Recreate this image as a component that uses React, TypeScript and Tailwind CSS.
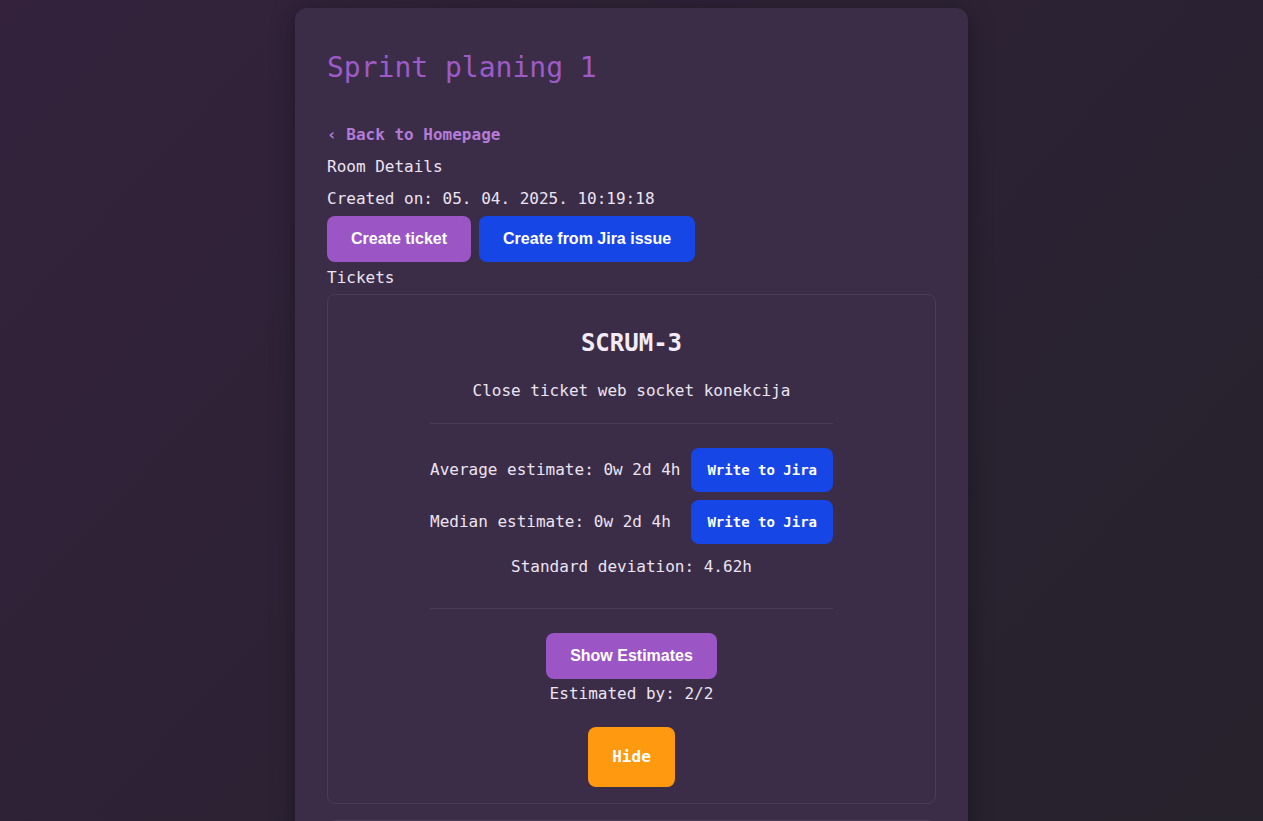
import React from 'react';

const mono = "font-['DejaVu_Sans_Mono','Liberation_Mono',monospace]";
const sans = "font-['Liberation_Sans',Arial,sans-serif]";

function EstimateRow({ label, value }: { label: string; value: string }) {
  return (
    <div className="flex items-center justify-between">
      <span>
        {label}: {value}
      </span>
      <button className="rounded-lg bg-[#1746e6] px-4 py-[12px] text-[14px] leading-5 font-bold text-white">
        Write to Jira
      </button>
    </div>
  );
}

function TicketCard() {
  return (
    <div className="rounded-lg border border-[#4b3d5a] bg-[#3b2d48] px-6 pt-8 pb-4">
      <h3 className="text-center text-[24px] leading-8 font-bold text-[#f3ecf7]">SCRUM-3</h3>
      <p className="mt-5 text-center">Close ticket web socket konekcija</p>
      <div className="mx-auto w-[403px]">
        <div className="mt-5 h-px bg-[#4b3d5a]" />
        <div className="mt-6 flex flex-col gap-2">
          <EstimateRow label="Average estimate" value="0w 2d 4h" />
          <EstimateRow label="Median estimate" value="0w 2d 4h" />
        </div>
        <p className="mt-[11px] text-center">Standard deviation: 4.62h</p>
        <div className="mt-[29px] h-px bg-[#4b3d5a]" />
      </div>
      <div className="mt-6 flex flex-col items-center">
        <button
          className={`${sans} rounded-lg bg-[#9b55c5] px-6 py-[11px] text-base leading-6 font-bold text-white`}
        >
          Show Estimates
        </button>
        <p className="mt-[3px]">Estimated by: 2/2</p>
        <button className="mt-[21px] rounded-lg bg-[#ff990f] px-6 py-[18px] text-base leading-6 font-bold text-white">
          Hide
        </button>
      </div>
    </div>
  );
}

export default function App() {
  return (
    <div
      className={`${mono} min-h-screen bg-gradient-to-br from-[#34223c] via-[#2a2232] to-[#242227] text-[#ede4f2]`}
    >
      <div className="mx-auto w-[673px] pt-2">
        <div className="rounded-xl bg-[#3b2d48] px-8 pt-[39px] pb-8 shadow-[0_4px_24px_rgba(0,0,0,0.35)]">
          <h1 className="text-[28px] leading-[42px] text-[#9d5bc8]">Sprint planing 1</h1>

          <a href="#" className="mt-[34px] block font-bold text-[#b57bd8]">
            ‹ Back to Homepage
          </a>
          <p className="mt-2">Room Details</p>
          <p className="mt-2">Created on: 05. 04. 2025. 10:19:18</p>

          <div className={`${sans} mt-[5px] flex gap-2`}>
            <button className="rounded-lg bg-[#9b55c5] px-6 py-[11px] text-base leading-6 font-bold text-white">
              Create ticket
            </button>
            <button className="rounded-lg bg-[#1746e6] px-6 py-[11px] text-base leading-6 font-bold text-white">
              Create from Jira issue
            </button>
          </div>

          <p className="mt-[4px]">Tickets</p>

          <div className="mt-[4px] flex flex-col gap-4">
            <TicketCard />
            <TicketCard />
          </div>
        </div>
      </div>
    </div>
  );
}
